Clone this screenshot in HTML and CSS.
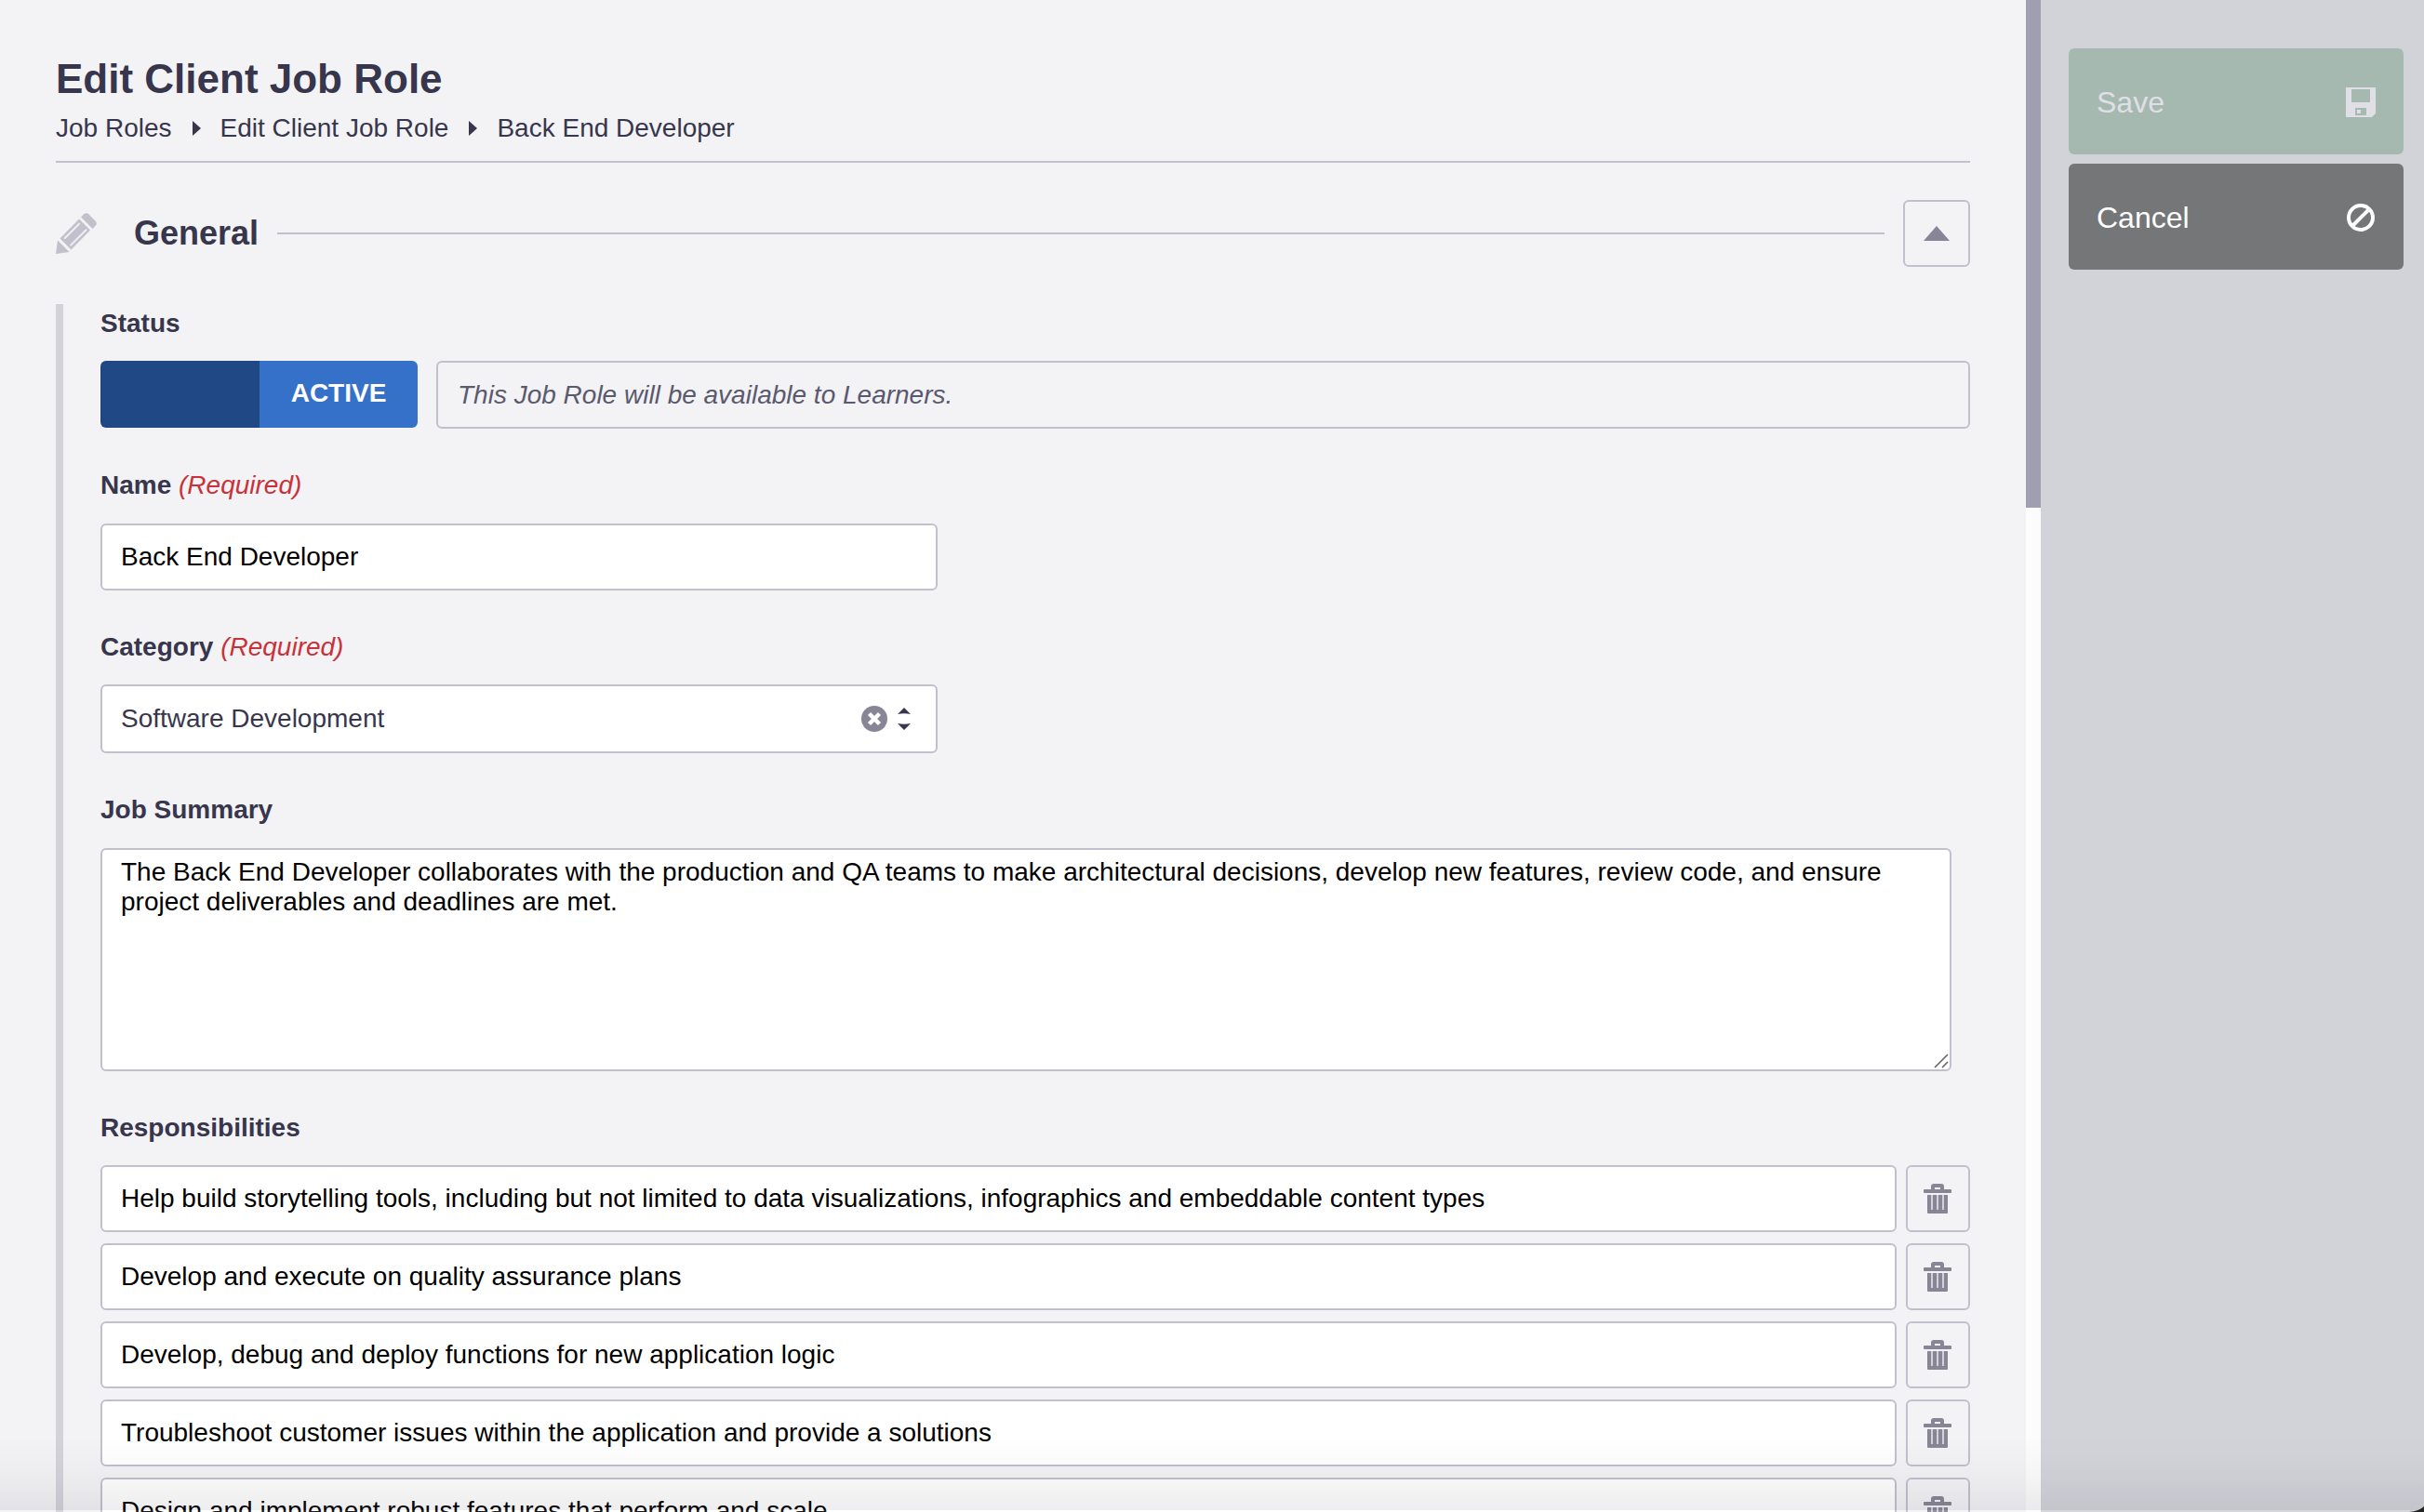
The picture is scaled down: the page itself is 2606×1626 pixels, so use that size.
FILE: index.html
```html
<!DOCTYPE html>
<html lang="en">
<head>
  <meta charset="UTF-8">
  <meta name="viewport" content="width=device-width, initial-scale=1.0">
  <title>Edit Client Job Role</title>
  <link rel="stylesheet" href="styles.css">
</head>
<body>

  <!-- Shared icons -->
  <svg class="icon-defs" width="0" height="0">
    <symbol id="trash" viewBox="0 0 30 32">
      <path fill-rule="evenodd" d="M1 6h7V3a3 3 0 0 1 3-3h8a3 3 0 0 1 3 3v3h7a1 1 0 0 1 1 1v2a1 1 0 0 1-1 1H1a1 1 0 0 1-1-1V7a1 1 0 0 1 1-1zM12 4v2h6V4z"/>
      <path d="M4 12h4.300v16h1.400V12h4.600v16h1.400V12h4.600v16h1.400V12H26v19a1 1 0 0 1-1 1H5a1 1 0 0 1-1-1z"/>
    </symbol>
  </svg>

  <main class="content">
    <header class="page-header">
      <h1>Edit Client Job Role</h1>
      <nav class="breadcrumb">
        <span>Job Roles</span>
        <i class="crumb-arrow"></i>
        <span>Edit Client Job Role</span>
        <i class="crumb-arrow"></i>
        <span>Back End Developer</span>
      </nav>
    </header>

    <div class="section-header">
      <svg class="pencil" viewBox="0 0 44 44">
        <path d="M27 4.500l3.200-3.200a4 4 0 0 1 5 0l7.500 7.500a4 4 0 0 1 0 5l-3.200 3.200z"/>
        <path fill-rule="evenodd" d="M25 6.500L37 18.500 16.500 39.500 4.500 27.500zM25 10.500L8.500 27l1.300 1.300L26.300 11.800zM32.500 17L15 34.500l1.300 1.300L33.800 18.300z"/>
        <path d="M2 29.500L14.500 42 0 44z"/>
      </svg>
      <h2>General</h2>
      <div class="line"></div>
      <button class="toggle-section"><i class="arrow-up"></i></button>
    </div>

    <form class="section-body">
      <label class="label low">Status</label>
      <div class="status-row">
        <div class="switch">
          <span class="switch-off"></span>
          <span class="switch-on">ACTIVE</span>
        </div>
        <div class="status-note">This Job Role will be available to Learners.</div>
      </div>

      <label class="label">Name <em>(Required)</em></label>
      <input class="field short" type="text" value="Back End Developer">

      <label class="label low">Category <em>(Required)</em></label>
      <div class="field short select">
        <span>Software Development</span>
        <svg class="clear" viewBox="0 0 28 28">
          <circle cx="14" cy="14" r="14"/>
          <path d="M8.500 8.500l11 11M19.500 8.500l-11 11"/>
        </svg>
        <svg class="sort" viewBox="0 0 14 24">
          <path d="M0 7l7-7 7 7q-7-1.500-14 0zM0 17l7 7 7-7q-7 1.500-14 0z"/>
        </svg>
      </div>

      <label class="label">Job Summary</label>
      <div class="summary">
        <textarea class="field">The Back End Developer collaborates with the production and QA teams to make architectural decisions, develop new features, review code, and ensure project deliverables and deadlines are met.</textarea>
        <svg class="grip" viewBox="0 0 16 16">
          <path d="M1 15L15 1M9 15l6-6"/>
        </svg>
      </div>

      <label class="label low">Responsibilities</label>
      <div class="item">
        <input class="field" type="text" value="Help build storytelling tools, including but not limited to data visualizations, infographics and embeddable content types">
        <button class="delete" type="button"><svg><use href="#trash"/></svg></button>
      </div>
      <div class="item">
        <input class="field" type="text" value="Develop and execute on quality assurance plans">
        <button class="delete" type="button"><svg><use href="#trash"/></svg></button>
      </div>
      <div class="item">
        <input class="field" type="text" value="Develop, debug and deploy functions for new application logic">
        <button class="delete" type="button"><svg><use href="#trash"/></svg></button>
      </div>
      <div class="item">
        <input class="field" type="text" value="Troubleshoot customer issues within the application and provide a solutions">
        <button class="delete" type="button"><svg><use href="#trash"/></svg></button>
      </div>
      <div class="item">
        <input class="field" type="text" value="Design and implement robust features that perform and scale">
        <button class="delete" type="button"><svg><use href="#trash"/></svg></button>
      </div>
    </form>
  </main>

  <div class="scrollbar"><div class="thumb"></div></div>

  <aside class="sidebar">
    <button class="action save">
      <span>Save</span>
      <svg viewBox="0 0 32 32">
        <path fill-rule="evenodd" d="M0 0h32v28l-4 4H0zM6 2v14h20V2zM10 22v8h12v-8zM12 24h4v4h-4z"/>
      </svg>
    </button>
    <button class="action cancel">
      <span>Cancel</span>
      <svg viewBox="0 0 32 32">
        <circle cx="16" cy="16" r="13"/>
        <path d="M7 25L25 7"/>
      </svg>
    </button>
  </aside>

  <div class="bottom-fade"></div>
  <svg class="corner" viewBox="0 0 16 6">
    <path d="M16 0Q11 5 0 6H16z"/>
  </svg>

</body>
</html>
```
FILE: styles.css
```css
* {
  box-sizing: border-box;
}

body {
  margin: 0;
  height: 100vh;
  display: flex;
  overflow: hidden;
  background-color: #f3f3f5;
  color: #37364d;
  font-family: Arial, "Liberation Sans", sans-serif;
  font-size: 28px;
  line-height: 32px;
}

button,
input,
textarea {
  font-family: inherit;
  font-size: 28px;
  margin: 0;
}

.icon-defs {
  position: absolute;
}

.content {
  flex: 1;
  padding: 60px 60px 0;
  height: 100vh;
  overflow: hidden;
}

/* Header */
.page-header {
  height: 115px;
  border-bottom: 2px solid #c1c0cc;
}

h1 {
  margin: 0;
  font-size: 44px;
  line-height: 50px;
}

.breadcrumb {
  display: flex;
  align-items: center;
  margin-top: 12px;
}

.crumb-arrow {
  margin: 0 21px 0 22px;
  border-left: 9px solid #37364d;
  border-top: 8px solid transparent;
  border-bottom: 8px solid transparent;
}

.section-header {
  display: flex;
  align-items: center;
  margin-top: 40px;
  height: 72px;
}

.pencil {
  width: 44px;
  height: 44px;
  fill: #c1c0cc;
}

h2 {
  margin: 0 20px 0 40px;
  font-size: 36px;
  line-height: 42px;
}

.line {
  flex: 1;
  height: 2px;
  background-color: #c1c0cc;
}

.toggle-section {
  display: flex;
  align-items: center;
  justify-content: center;
  width: 72px;
  height: 72px;
  margin-left: 20px;
  border: 2px solid #c1c0cc;
  border-radius: 6px;
  background: none;
}

.arrow-up {
  border-bottom: 16px solid #878596;
  border-left: 14px solid transparent;
  border-right: 14px solid transparent;
}

/* Form */
.section-body {
  margin-top: 40px;
  padding-left: 40px;
  border-left: 8px solid #d2d3d9;
  height: 1400px;
}

.label {
  display: block;
  padding-top: 4px;
  height: 61px;
  font-weight: bold;
}

.label.low {
  padding-top: 5px;
}

.label em {
  font-weight: normal;
  color: #c8323a;
}

.field {
  display: block;
  width: 100%;
  height: 72px;
  padding: 0 20px;
  border: 2px solid #c1c0cc;
  border-radius: 6px;
  background-color: #fff;
  color: #000;
  outline: none;
}

.short {
  width: 900px;
  margin-bottom: 40px;
}

.status-row {
  display: flex;
  gap: 20px;
  margin-bottom: 41px;
}

.switch {
  display: flex;
  width: 341px;
  height: 72px;
  border-radius: 6px;
  overflow: hidden;
  color: #fff;
  font-weight: bold;
  line-height: 70px;
  text-align: center;
}

.switch-off {
  width: 171px;
  background-color: #204885;
}

.switch-on {
  flex: 1;
  background-color: #3671c9;
}

.status-note {
  flex: 1;
  height: 73px;
  padding: 0 21px;
  border: 2px solid #c1c0cc;
  border-radius: 6px;
  color: #5b5970;
  font-style: italic;
  line-height: 69px;
}

.select {
  display: flex;
  align-items: center;
  height: 74px;
  margin-bottom: 41px;
  color: #37364d;
}

.select span {
  flex: 1;
}

.clear {
  width: 28px;
  height: 28px;
  margin-right: 11px;
  fill: #878596;
}

.clear path {
  stroke: #fff;
  stroke-width: 4.5;
}

.sort {
  width: 14px;
  height: 24px;
  margin-right: 7px;
  fill: #37364d;
}

.summary {
  position: relative;
  width: 1990px;
  margin-bottom: 40px;
}

.summary textarea {
  height: 240px;
  padding: 8px 20px;
  line-height: 32px;
  resize: none;
}

/* resize handle in the textarea corner */
.grip {
  position: absolute;
  right: 3px;
  bottom: 3px;
  width: 16px;
  height: 16px;
  fill: none;
  stroke: #666;
  stroke-width: 1.6;
}

.item {
  display: flex;
  gap: 10px;
  margin-bottom: 12px;
}

.item .field {
  flex: 1;
}

.delete {
  display: flex;
  justify-content: center;
  align-items: center;
  width: 69px;
  height: 72px;
  padding: 0 1px 0 0;
  border: 2px solid #c1c0cc;
  border-radius: 6px;
  background: none;
}

.delete svg {
  width: 30px;
  height: 32px;
  fill: #878596;
}

.scrollbar {
  width: 16px;
  background-color: #fcfcfc;
}

.thumb {
  height: 546px;
  background-color: #a09fb0;
}

/* Sidebar */
.sidebar {
  width: 412px;
  padding: 52px 22px 0 30px;
  background-color: #d2d3d9;
}

.action {
  display: flex;
  align-items: center;
  justify-content: space-between;
  width: 100%;
  height: 114px;
  margin-bottom: 10px;
  padding: 2px 30px 0;
  border: none;
  border-radius: 6px;
  color: #fff;
  font-size: 32px;
}

.action svg {
  width: 32px;
  height: 32px;
}

.save {
  background-color: #a5b9b1;
  color: #e0dfe5;
}

.save svg {
  fill: #e0dfe5;
}

.cancel {
  background-color: #757678;
}

.cancel svg {
  fill: none;
  stroke: #fff;
  stroke-width: 4;
}

.bottom-fade {
  position: absolute;
  left: 0;
  right: 0;
  bottom: 0;
  height: 80px;
  border-bottom: 2px solid rgba(255, 255, 255, 0.1);
  background: linear-gradient(rgba(60, 50, 70, 0), rgba(60, 50, 70, 0.03) 50%, rgba(60, 50, 70, 0.09));
  pointer-events: none;
}

.corner {
  position: absolute;
  right: 0;
  bottom: 0;
  width: 16px;
  height: 6px;
  fill: #222;
}
```
